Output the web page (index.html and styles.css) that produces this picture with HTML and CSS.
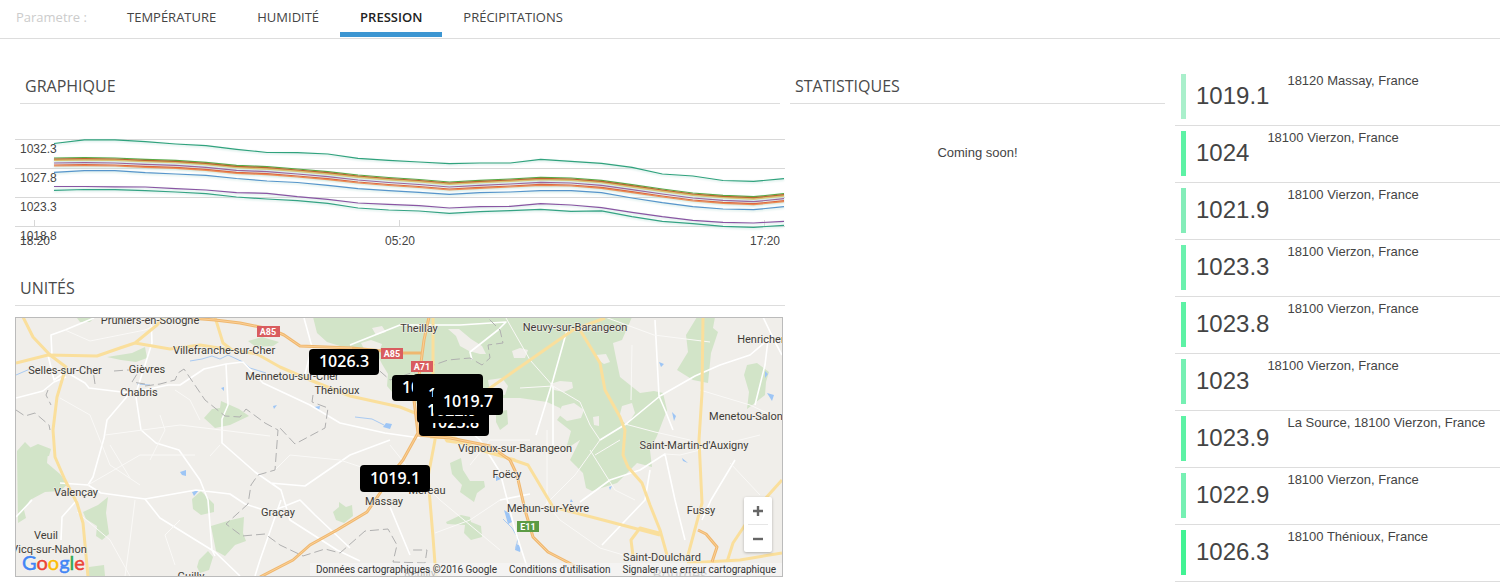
FILE: index.html
```html
<!DOCTYPE html>
<html lang="fr">
<head>
<meta charset="utf-8">
<title>Pression</title>
<link rel="stylesheet" href="styles.css">
</head>
<body>
<nav class="tabs">
  <span class="tabs-label">Parametre :</span>
  <a class="tab" href="#temperature">TEMPÉRATURE</a>
  <a class="tab" href="#humidite">HUMIDITÉ</a>
  <a class="tab tab-active" href="#pression" aria-current="page">PRESSION</a>
  <a class="tab" href="#precipitations">PRÉCIPITATIONS</a>
</nav>
<main class="board">
  <div class="column">
    <section>
      <h2 class="title title-inset">GRAPHIQUE</h2>
      <svg class="chart" viewBox="15 130 770 126" role="img" aria-label="Pression par unité">
        <path class="grid-line" d="M15 139.500H785M15 168.500H785M15 197.500H785M15 226.500H785M34.500 220V226M399.500 220V226M764.500 220V226"/>
        <defs>
          <path id="mid" d="M54 158 84.400 157.700 114.800 158 145.300 159.300 175.700 160.300 206 162.300 236.500 165.300 267 166.700 297.300 169 327.800 171.700 358 175 388.600 177.500 419 179.500 449.400 182 479.800 180.300 510.300 179 540.700 177.300 571 178 601.500 180.300 632 184.700 662.300 189 692.800 193 723 195.300 753.600 196.700 784 193.700"/>
        </defs>
        <g class="series">
          <path stroke="#30a27d" d="M54 143.500 84.400 139.900 114.800 139.900 145.300 141.700 175.700 144 206 145.700 236.500 149.300 267 152.500 297.300 152.700 327.800 154 358 158.300 388.600 160.300 419 162 449.400 163.600 479.800 163 510.300 163 540.700 159.400 571 161.300 601.500 163.300 632 167.300 662.300 174 692.800 176 723 180.500 753.600 181.400 784 178.700"/>
          <use href="#mid" y="2" stroke="#dcc070" stroke-width="2"/>
          <use href="#mid" stroke="#58a844"/>
          <use href="#mid" y="1" stroke="#b96731"/>
          <use href="#mid" y="5" stroke="#9a659e"/>
          <use href="#mid" y="8" stroke="#ed9457"/>
          <use href="#mid" y="7" stroke="#df6840"/>
          <path stroke="#5795cb" d="M54 172.300 84.400 170.700 114.800 170.700 145.300 172.700 175.700 174 206 175.300 236.500 178.500 267 181 297.300 182.500 327.800 185.300 358 188.700 388.600 190.700 419 192.300 449.400 194.300 479.800 192.700 510.300 192 540.700 190.700 571 190.700 601.500 192.700 632 198 662.300 202.700 692.800 206.700 723 209 753.600 209.700 784 206.700"/>
          <path stroke="#8a55a3" d="M54 186.500 84.400 186.500 114.800 186.800 145.300 187 175.700 188.700 206 190 236.500 192.700 267 193.300 297.300 196.700 327.800 199.300 358 203 388.600 204.300 419 205.700 449.400 208 479.800 206.700 510.300 206.300 540.700 203.700 571 205 601.500 207.700 632 212.300 662.300 216.700 692.800 220.300 723 222.300 753.600 223 784 221.300"/>
          <path stroke="#35a384" d="M54 190.300 84.400 189.500 114.800 189.700 145.300 190.700 175.700 192 206 193.700 236.500 197 267 199 297.300 200.700 327.800 203.300 358 208 388.600 210 419 211 449.400 213.300 479.800 211.700 510.300 210.700 540.700 209.400 571 211.300 601.500 210.900 632 216.700 662.300 221.300 692.800 223.700 723 226.300 753.600 227.300 784 225.300"/>
        </g>
        <g class="axis">
          <text x="20" y="153">1032.3</text><text x="20" y="182">1027.8</text><text x="20" y="211">1023.3</text><text x="20" y="240">1018.8</text>
          <text x="20" y="245">18:20</text><text x="385" y="245">05:20</text><text x="750" y="245">17:20</text>
        </g>
      </svg>
    </section>
    <section>
      <h2 class="title">UNITÉS</h2>
      <div class="map">
        <svg class="map-canvas" viewBox="16 318 766 258" role="img" aria-label="Carte des unités">
          <rect class="land" x="16" y="318" width="766" height="258"/>
          <g class="forest">
            <path d="M313 317 317 333 327 342 343 347 352 349 378 356 382 364 388 374 387 386 393 393 409 397 418 405 440 400 480 402 498 398 520 398 547 402 560 408 562 413 557 420 571 431 566 449 580 440 570 460 583 473 586 488 592 491 617 483 630 470 637 463 652 467 650 450 657 436 667 410 663 393 654 391 640 393 630 385 620 377 616 358 613 343 622 340 632 317Z"/>
            <path d="M697 317H715L713 328 718 332 711 353 708 383 693 380 677 370 688 352 686 335ZM747 365 757 363 769 372 766 382 765 395 755 403 747 409 749 392 744 375Z"/>
            <path d="M17 451 25 442 35 452 48 452 47 463 60 474 68 484 60 491 45 492 30 500 24 510 26 518 18 523ZM83 512 98 505 108 497 106 513 109 534 102 540 96 536 97 526 86 519ZM192 499 201 491 214 504 214 512 201 515 193 509ZM211 526 231 520 244 517 243 533 246 541 235 545 225 556 216 551ZM199 560 208 551 213 557 209 570 200 573 197 567ZM89 567 104 565 105 576H88ZM107 357 132 353 145 347 147 358 136 362 121 360ZM204 418 212 409 220 408 221 401 239 409 249 416 230 425 215 428ZM77 318H94L90 322 80 322ZM25 450 38 444 51 449 49 456 28 459ZM248 341 262 337 279 342 273 346 256 347Z"/>
            <path d="M333 512 339 507 339 502 346 507 352 505 353 516 344 523 336 520ZM450 463 461 458 463 470 470 481 484 481 485 487 477 493 474 502 460 492 462 485 452 474ZM446 522 461 515 470 517 471 522 481 526 482 537 471 540 464 533 465 525 447 524ZM496 412 507 410 508 424 500 430 496 422Z"/>
          </g>
          <g class="land">
            <path d="M448 329 459 329 471 339 482 346 486 354 480 354 469 351 460 346 456 336ZM372 328 382 326 386 332 376 335ZM361 343 371 340 382 344 379 352 365 351ZM512 351 520 348 528 350 525 358 514 358ZM550 384 560 381 572 382 573 388 564 392 554 390ZM562 406 574 403 584 410 581 418 567 421 558 414ZM596 355 606 354 610 362 604 364 598 360ZM622 406 632 403 635 413 627 425 619 418ZM593 417 599 416 599 426 594 425ZM488 380 502 378 508 386 505 395 490 392Z"/>
          </g>
          <g class="water">
            <path d="M180 472 186 470 186 476 182 475ZM192 492 199 490 194 496ZM386 423 392 424 390 429 383 427ZM314 407 320 406 319 411ZM659 362 664 364 661 367ZM765 371 768 374 765 378ZM767 393 774 395 772 401ZM774 403 777 407ZM672 412 676 416 674 421ZM504 510 509 513 512 522 508 524ZM516 544 521 546 520 552 515 550ZM221 388 224 387 224 391ZM273 406 277 405 274 409ZM496 475 501 479 496 481ZM609 487 612 486 610 490ZM571 499 573 502 570 502ZM682 458 688 463 683 461Z"/>
            <path class="river" d="M16 375 30 369M190 361 202 359 212 356 220 359 228 355 243 362 250 368 266 373M137 384 150 385M503 519 512 528 518 538 516 548M355 417 372 419 384 425"/>
          </g>
          <path class="lane" d="M48 355 54 380 66 371M52 355 51 335 65 330 94 318M16 398 43 391 54 382 66 377M66 372 85 383 89 388 130 393 168 385 180 385 204 369 226 364 243 362 263 383 310 405 340 423 385 433 420 438M130 393 107 420 104 438 93 477 88 485M136 397 141 430 156 443 179 450 200 480 208 500 212 550 215 556M151 317 152 343 136 393M226 364 228 405 222 419 222 443 255 472 281 490 290 520 337 550 360 561M88 485 101 493 145 499 196 490 230 494 245 504 270 512 300 500 315 515 350 548M145 499 160 518 215 552 240 576M77 500 62 517 61 540M32 500 16 517M60 483 88 485M281 500 260 560 255 576M304 318 312 347 305 374M350 345 400 325 460 325 506 322 498 330 470 352 472 360M390 507 410 555M500 500 530 494M567 330 553 380 536 435M553 386 553 445M655 320 659 396 665 410 673 430M600 440 626 424 660 396 695 376 720 365 750 355 770 338M763 317 774 340 782 355M768 340 765 365 755 405M434 401 480 440 500 472 515 530 530 576M580 502 610 480 640 470 665 454 675 500 685 540M602 545 645 500 650 470M735 460 711 500 702 520M270 483 305 486 350 455 390 440"/>
          <path class="lane thin" d="M65 330 90 341 145 330 165 321M60 398 90 415 110 465 140 485M105 435 180 425 270 436M160 415 165 430 150 460M110 445 130 478M175 390 190 400 200 420M88 485 140 455 195 455M77 512 110 540 130 576M210 456 220 445M135 500 130 540 125 576M180 520 165 535 175 565M472 382 480 400 460 425 440 435M435 533 470 520 500 500M506 318 530 360 553 386 580 402 590 425 600 440 575 475 545 505M553 386 520 388M547 430 547 505 560 520 600 548 640 560M625 424 655 432 690 440M390 445 410 470 440 500 500 550M665 454 680 455 760 435M275 470 290 455 340 460 388 476M530 440 490 440 470 465M632 345 631 400M605 317 654 335 710 342M700 390 750 405 782 420M590 450 615 490 635 500M730 463 760 495M620 440 595 455"/>
          <path class="border-line" d="M16 410 25 416 35 413 49 425 50 430M48 390 46 395 51 405M95 384 93 370 104 369M114 371 128 370 138 370M145 384 132 382 137 374M145 386 160 384 175 380 178 373 184 369 205 400 225 416 240 417 246 409 265 423 278 430 275 470 258 475 251 485 248 504 226 524 242 536 265 534 280 545 303 556 325 549 340 553 365 531 388 529 397 545 393 562 425 563 427 550 409 550M349 347 365 358 390 380 420 370 448 360 470 358 482 365 490 358 488 345 503 343 500 330 488 318M313 395 312 402 328 408 325 428 295 444 280 428"/>
          <g class="road">
            <path d="M23 317 33 337 50 355 66 367 57 397 53 430 55 457 65 480 77 503 83 523 88 577"/>
            <path d="M16 363 48 355 97 356 120 348 135 343 157 325 163 317M135 343 170 349 200 345 257 354 280 367 310 380 350 396 400 407 420 415 440 435M215 317 223 343 232 350"/>
            <path d="M433 317V373L435 440 428 477 433 537 436 577M440 430 447 441 462 443 505 457 528 465 553 507 603 520 660 535M430 437 455 438 480 450 515 460"/>
            <path d="M483 393 520 367 573 330 605 318M577 325 600 363 605 390 620 417 625 430 623 455 628 467 642 483 650 505 660 530 667 555M703 317 702 393 699 440 702 503 688 555M782 480 755 510 733 543 727 562M687 563 740 560 782 553M659 533 640 528 631 540 633 556"/>
          </g>
          <path class="motorway" d="M190 318 215 320 240 323 270 329 284 335 300 346 352 348 403 353 423 353M429 317 424 340 420 370 414 400 418 433 403 460 390 476 380 493 367 512 337 530 310 545 293 560 260 577M418 435 450 438 490 446 510 460 517 475 525 510 533 537 548 552 575 566M698 530 706 534 717 547 712 562"/>
          <path class="motorway-core" d="M190 318 215 320 240 323 270 329 284 335 300 346 352 348M429 317 424 340 420 370 414 400 418 433 403 460 390 476 380 493 367 512 337 530 310 545 293 560 260 577M418 435 450 438 490 446 510 460 517 475 525 510 533 537 548 552 575 566M698 530 706 534 717 547 712 562"/>
          <g class="shield">
            <rect x="257" y="326" width="23" height="11"/><rect x="381" y="348" width="22" height="11"/><rect x="411" y="361" width="22" height="11"/><rect class="euro" x="517" y="521" width="22" height="11"/>
            <text x="268" y="335">A85</text><text x="392" y="357">A85</text><text x="422" y="370">A71</text><text x="528" y="530">E11</text>
          </g>
          <g class="places">
            <text x="150" y="324">Pruniers-en-Sologne</text><text x="224" y="354">Villefranche-sur-Cher</text><text x="65" y="374">Selles-sur-Cher</text><text x="147" y="373">Gièvres</text><text x="139" y="396">Chabris</text><text x="292" y="380">Mennetou-sur-Cher</text><text x="337" y="394">Thénioux</text><text x="419" y="332">Theillay</text><text x="575" y="331">Neuvy-sur-Barangeon</text><text x="767" y="343">Henrichemo</text><text x="746" y="420">Menetou-Salon</text><text x="694" y="449">Saint-Martin-d'Auxigny</text><text x="515" y="452">Vignoux-sur-Barangeon</text><text x="507" y="478">Foëcy</text><text x="548" y="512">Mehun-sur-Yèvre</text><text x="427" y="494">Méreau</text><text x="384" y="505">Massay</text><text x="278" y="516">Graçay</text><text x="76" y="496">Valençay</text><text x="46" y="539">Veuil</text><text x="49" y="553">Vicq-sur-Nahon</text><text x="191" y="580">Guilly</text><text x="701" y="514">Fussy</text><text x="662" y="561">Saint-Doulchard</text><text x="420" y="577">Reuilly</text><text class="city" x="680" y="580">Bourges</text>
          </g>
          <g class="pins">
            <rect x="309" y="349" width="70" height="26" rx="4"/><text x="344" y="367">1026.3</text>
            <rect x="360" y="465" width="70" height="27" rx="4"/><text x="395" y="484">1019.1</text>
            <rect x="392" y="375" width="70" height="26" rx="4"/><text x="427" y="393">1023.9</text>
            <rect x="413" y="374" width="70" height="27" rx="4"/><text x="448" y="393">1023.3</text>
            <rect x="418" y="381" width="64" height="27" rx="4"/><text x="453" y="400">1021.9</text>
            <rect x="419" y="409" width="70" height="27" rx="4"/><text x="454" y="428">1023.8</text>
            <rect x="417" y="397" width="70" height="26" rx="4"/><text x="452" y="416">1022.9</text>
            <rect x="433" y="388" width="70" height="27" rx="4"/><text x="468" y="407">1019.7</text>
          </g>
        </svg>
        <a class="logo" href="#google" aria-label="Google"><span class="g-blue">G</span><span class="g-red">o</span><span class="g-yellow">o</span><span class="g-blue">g</span><span class="g-green">l</span><span class="g-red">e</span></a>
        <div class="credits"><span>Données cartographiques ©2016 Google</span><a href="#conditions">Conditions d'utilisation</a><a href="#erreur">Signaler une erreur cartographique</a></div>
        <div class="zoom">
          <button class="zoom-button" type="button" aria-label="Zoom avant"><svg viewBox="0 0 12 12" width="12" height="12"><path d="M1 6H11M6 1V11"/></svg></button>
          <button class="zoom-button" type="button" aria-label="Zoom arrière"><svg viewBox="0 0 12 12" width="12" height="12"><path d="M1 6H11"/></svg></button>
        </div>
      </div>
    </section>
  </div>
  <section class="column">
    <h2 class="title title-stats">STATISTIQUES</h2>
    <p class="soon">Coming soon!</p>
  </section>
  <ul class="readings">
    <li class="reading"><span class="level level-1"></span><span class="value">1019.1</span><span class="place">18120 Massay, France</span></li>
    <li class="reading"><span class="level level-5"></span><span class="value">1024</span><span class="place">18100 Vierzon, France</span></li>
    <li class="reading"><span class="level level-2"></span><span class="value">1021.9</span><span class="place">18100 Vierzon, France</span></li>
    <li class="reading"><span class="level level-4"></span><span class="value">1023.3</span><span class="place">18100 Vierzon, France</span></li>
    <li class="reading"><span class="level level-5"></span><span class="value">1023.8</span><span class="place">18100 Vierzon, France</span></li>
    <li class="reading"><span class="level level-3"></span><span class="value">1023</span><span class="place">18100 Vierzon, France</span></li>
    <li class="reading"><span class="level level-5"></span><span class="value">1023.9</span><span class="place">La Source, 18100 Vierzon, France</span></li>
    <li class="reading"><span class="level level-3"></span><span class="value">1022.9</span><span class="place">18100 Vierzon, France</span></li>
    <li class="reading"><span class="level level-6"></span><span class="value">1026.3</span><span class="place">18100 Thénioux, France</span></li>
  </ul>
</main>
</body>
</html>
```
FILE: styles.css
```css
* { box-sizing: border-box; }
body { margin: 0; background: #fff; color: #444; font: 13px/18px "Liberation Sans", Arial, sans-serif; }

.tabs { display: flex; gap: 1px; padding-left: 16px; border-bottom: 1px solid #ddd; font: 13px/34px "Open Sans", sans-serif; }
.tabs-label { width: 90px; color: #ccc; }
.tab { height: 38px; padding: 0 20px; color: #444; text-decoration: none; }
.tab-active { height: 37px; border-bottom: 5px solid #3c96d2; color: #222; font-weight: 600; }

.board { display: grid; grid-template-columns: 770fr 375fr 330fr; column-gap: 5px; padding: 30px 0 0 15px; }
.column { min-width: 0; padding-top: 5px; }
.title { margin: 0; padding: 0 5px 5px; border-bottom: 1px solid #ddd; color: #4a4a4a; font: 16px/24px "Open Sans", sans-serif; }
.title-inset { margin: 0 5px; }

.chart { display: block; width: 100%; margin: 26px 0 20px; }
.grid-line { fill: none; stroke: #d8d8d8; }
.series { fill: none; stroke-width: 1.2; filter: drop-shadow(0 1px 1px #c4e4dd); }
.axis { fill: #444; font: 12px "Liberation Sans", Arial, sans-serif; }

.map { position: relative; margin: 11px 2px 0 0; border: 1px solid #bbb; overflow: hidden; }
.map-canvas { display: block; width: 100%; }
.land { fill: #f0eeea; }
.forest { fill: #d2e4c8; }
.water { fill: #9dc5f5; }
.river { fill: none; stroke: #a9caf2; stroke-width: 1; }
.lane { fill: none; stroke: #fff; stroke-width: 1.6; stroke-linejoin: round; }
.thin { stroke: #faf9f7; stroke-width: 1; }
.border-line { fill: none; stroke: #b0b0b0; stroke-width: 1; stroke-dasharray: 9 4; }
.road { fill: none; stroke: #fadf9c; stroke-width: 3; stroke-linejoin: round; }
.motorway { fill: none; stroke: #efb870; stroke-width: 3; stroke-linejoin: round; }
.motorway-core { fill: none; stroke: #fccf95; stroke-width: 1; stroke-linejoin: round; }
.shield { fill: #d95c5f; font: 700 9px Roboto, sans-serif; text-anchor: middle; }
.shield text { fill: #fff; }
.euro { fill: #5c9b45; }
.places { fill: #403b36; font: 11px Roboto, sans-serif; text-anchor: middle; paint-order: stroke; stroke: #f4f2ee; stroke-width: 1; }
.city { fill: #777; font-size: 15px; }
.pins { font: 600 16px "Open Sans", sans-serif; text-anchor: middle; }
.pins text { fill: #fff; }

.logo { position: absolute; left: 6px; bottom: 2px; font: 20px/24px Lato, sans-serif; text-decoration: none; text-shadow: 0 0 2px #fff; -webkit-text-stroke: 0.5px; }
.g-blue { color: #4285f4; }
.g-red { color: #ea4335; }
.g-yellow { color: #fbbc05; }
.g-green { color: #34a853; }
.credits { position: absolute; right: 0; bottom: 0; display: flex; gap: 12px; padding: 1px 6px 0; background: #f5f5f5b3; color: #333; font: 10px/12px Roboto, sans-serif; white-space: nowrap; }
.credits a { color: #333; text-decoration: none; }
.zoom { position: absolute; right: 10px; bottom: 24px; width: 28px; padding: 0 4px; border-radius: 2px; background: #fff; box-shadow: 0 1px 3px #0004; }
.zoom-button { display: flex; align-items: center; justify-content: center; width: 100%; height: 27px; padding: 0; border: 0; background: none; fill: none; stroke: #666; stroke-width: 2.4; }
.zoom-button + .zoom-button { height: 28px; border-top: 1px solid #e6e6e6; }

.soon { margin: 40px 0 0; text-align: center; }

.readings { margin: 0; padding: 0 0 0 5px; list-style: none; }
.reading { display: flex; height: 57px; padding: 5px 0 6px 6px; border-bottom: 1px solid #ddd; }
.level { width: 5px; height: 45px; margin-right: 10px; }
.level-1 { background: #a9efcb; }
.level-2 { background: #84edb9; }
.level-3 { background: #76f0b3; }
.level-4 { background: #6bf1ae; }
.level-5 { background: #5df2a5; }
.level-6 { background: #42f394; }
.value { margin-right: 18px; font-size: 24px; line-height: 43px; }
.place { line-height: 14px; }
```
